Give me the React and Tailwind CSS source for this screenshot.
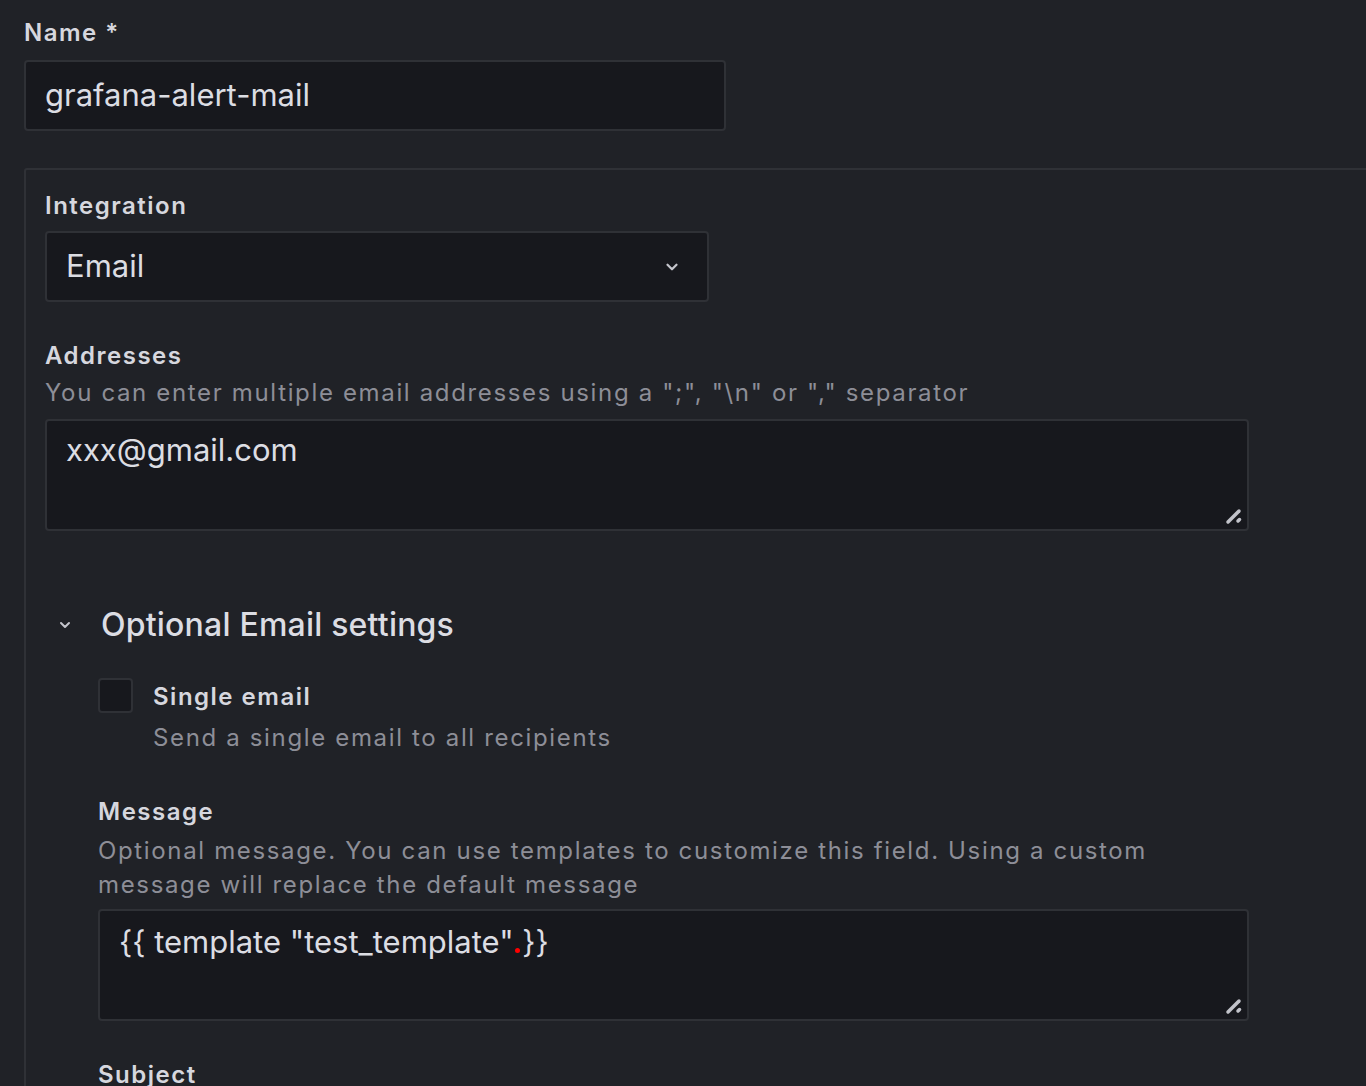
import React from 'react'

const font = { fontFamily: 'Inter, "Noto Sans", sans-serif' }

const ResizeHandle = () => (
  <svg className="absolute right-[3px] bottom-[3px]" width="20" height="20" viewBox="0 0 20 20">
    <line x1="4" y1="16" x2="15" y2="5" stroke="#c2c3ca" strokeWidth="3.5" strokeLinecap="round" />
    <line x1="14" y1="15" x2="15.5" y2="13.5" stroke="#c2c3ca" strokeWidth="3.5" strokeLinecap="round" />
  </svg>
)

const Chevron = ({ className, size = 16 }) => (
  <svg className={className} width={size} height={size} viewBox="0 0 16 16" fill="none">
    <path d="M4 6l4 4 4-4" stroke="#c4c5cc" strokeWidth="2" strokeLinecap="round" strokeLinejoin="round" />
  </svg>
)

const Label = ({ children, className = '' }) => (
  <div className={`text-[24px] leading-[32px] font-semibold tracking-[1.5px] text-[#d6d7de] ${className}`}>{children}</div>
)

const Description = ({ children, className = '' }) => (
  <div className={`text-[24px] leading-[34px] tracking-[1.65px] text-[#8d8e97] ${className}`}>{children}</div>
)

export default function App() {
  return (
    <div style={font} className="min-h-screen w-full overflow-hidden bg-[#202227] pl-[24px] pt-[17px]">
      <Label>Name *</Label>
      <div className="mt-[11px] flex h-[71px] w-[702px] items-center rounded-[4px] border-2 border-[#2f3136] bg-[#17181d] px-[19px] text-[31px] text-[#dcdde3]">
        grafana-alert-mail
      </div>

      <div className="mt-[37px] w-[1400px] rounded-[3px] border-2 border-[#2f3136] pl-[19px] pt-[20px] pb-[40px]">
        <Label>Integration</Label>
        <div className="mt-[9px] flex h-[71px] w-[664px] items-center justify-between rounded-[4px] border-2 border-[#2f3136] bg-[#17181d] pl-[19px] pr-[26px] text-[31px] text-[#dcdde3]">
          <span>Email</span>
          <Chevron size={18} />
        </div>

        <Label className="mt-[38px]">Addresses</Label>
        <Description className="mt-[4px]">You can enter multiple email addresses using a ";", "\n" or "," separator</Description>
        <div className="relative mt-[9px] h-[112px] w-[1204px] rounded-[4px] border-2 border-[#2f3136] bg-[#17181d] px-[19px] pt-[10px] text-[31px] leading-[38px] text-[#dcdde3]">
          xxx@gmail.com
          <ResizeHandle />
        </div>

        <div className="mt-[72px] flex items-center">
          <Chevron className="ml-[12px]" size={16} />
          <span className="ml-[28px] text-[32px] leading-[44px] font-medium tracking-[0.2px] text-[#dcdde3]">Optional Email settings</span>
        </div>

        <div className="ml-[53px] mt-[28px]">
          <div className="flex">
            <div className="mt-[3px] h-[35px] w-[35px] rounded-[4px] border-2 border-[#2f3136] bg-[#17181d]" />
            <div className="ml-[20px]">
              <Label className="mt-[6px]">Single email</Label>
              <Description className="mt-[8px]">Send a single email to all recipients</Description>
            </div>
          </div>

          <Label className="mt-[41px]">Message</Label>
          <Description className="mt-[6px]">
            Optional message. You can use templates to customize this field. Using a custom
            <br />
            message will replace the default message
          </Description>
          <div className="relative mt-[7px] h-[112px] w-[1151px] rounded-[4px] border-2 border-[#2f3136] bg-[#17181d] px-[19px] pt-[12px] text-[31px] leading-[38px] text-[#dcdde3]">
            {'{{ template "test_template"'}
            <span className="relative">
              {' '}
              <span className="absolute left-[1px] top-[25px] h-[5px] w-[5px] rounded-full bg-[#ff0000]" />
            </span>
            {'}}'}
            <ResizeHandle />
          </div>

          <Label className="mt-[38px]">Subject</Label>
        </div>
      </div>
    </div>
  )
}
